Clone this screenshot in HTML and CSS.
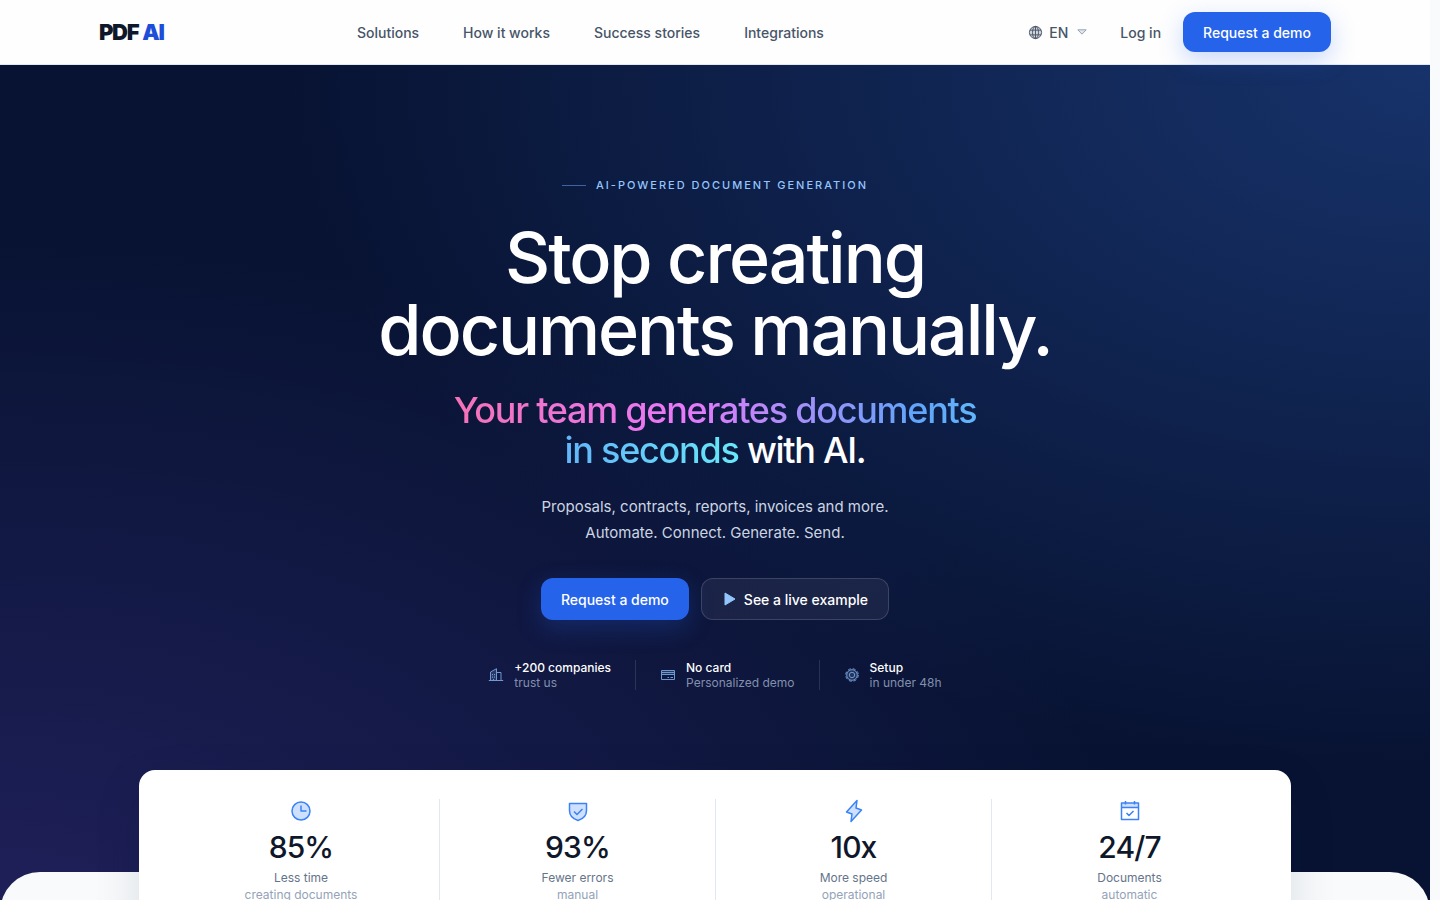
FILE: index.html
```html
<!DOCTYPE html>
<html lang="en">
<head>
  <meta charset="UTF-8">
  <meta name="viewport" content="width=device-width, initial-scale=1.0">
  <title>PDF AI</title>
  <link rel="stylesheet" href="styles.css">
</head>
<body>

  <header class="header">
    <div class="header-inner">
      <a class="logo" href="#">PDF<span>AI</span></a>

      <nav class="nav">
        <a href="#solutions">Solutions</a>
        <a href="#how">How it works</a>
        <a href="#stories">Success stories</a>
        <a href="#integrations">Integrations</a>
      </nav>

      <div class="header-actions">
        <div class="lang">
          <svg class="globe" viewBox="0 0 16 16" aria-hidden="true">
            <circle class="soft" cx="8" cy="8" r="6.5"/>
            <circle cx="8" cy="8" r="6.5"/>
            <ellipse cx="8" cy="8" rx="3.2" ry="6.5"/>
            <path d="M8 1.5v13M2 5.5h12M2 10.5h12"/>
          </svg>
          <select name="lang" aria-label="Language">
            <option>EN</option>
          </select>
          <svg class="caret" viewBox="0 0 10 6" aria-hidden="true">
            <path class="soft" d="M0.8 0.8h8.4L5 5.2z"/>
            <path d="M0.8 0.8h8.4L5 5.2z"/>
          </svg>
        </div>
        <a class="login" href="#login">Log in</a>
        <button type="button" class="btn btn-primary">Request a demo</button>
      </div>
    </div>
  </header>

  <main>
    <section class="hero">
      <p class="eyebrow">AI-powered document generation</p>
      <h1>Stop creating<br>documents manually.</h1>
      <p class="subtitle"><span class="gradient-text">Your team generates documents<br>in seconds</span> with AI.</p>
      <p class="lead">Proposals, contracts, reports, invoices and more.<br>Automate. Connect. Generate. Send.</p>

      <div class="hero-buttons">
        <button type="button" class="btn btn-primary btn-tall">Request a demo</button>
        <button type="button" class="btn btn-ghost btn-tall">
          <svg class="play" viewBox="0 0 14 16" aria-hidden="true"><path d="M3 2v12l10-6z"/></svg>
          See a live example
        </button>
      </div>

      <ul class="trust">
        <li>
          <svg viewBox="0 0 16 16" aria-hidden="true">
            <path class="soft" d="M3 5L8.500 2v12H3z"/>
            <path d="M.8 13.500h14.400M2.500 13.500V5L8.500 1.700V13.500M8.500 5.500h4.500v8M4.500 7v1.200M6.500 7v1.200M4.500 9.500v1.200M6.500 9.500v1.200M5.500 13.500v-1.500"/>
          </svg>
          <div><strong>+200 companies</strong><span>trust us</span></div>
        </li>
        <li>
          <svg viewBox="0 0 16 16" aria-hidden="true">
            <path class="soft" d="M1.500 3.500h13v4h-13z"/>
            <path d="M1.500 3.500h13v9h-13zM1.500 5.500h13M1.500 7.500h13M7.500 10.500h1.500M10.500 10.500h2.500"/>
          </svg>
          <div><strong>No card</strong><span>Personalized demo</span></div>
        </li>
        <li>
          <svg viewBox="0 0 16 16" aria-hidden="true">
            <circle class="soft" cx="8" cy="8" r="5.500"/>
            <circle cx="8" cy="8" r="5.300"/>
            <circle class="teeth" cx="8" cy="8" r="6.300"/>
            <circle cx="8" cy="8" r="2.700"/>
          </svg>
          <div><strong>Setup</strong><span>in under 48h</span></div>
        </li>
      </ul>
    </section>

    <section class="panel">
      <div class="stats">
        <div class="stat">
          <svg viewBox="0 0 24 24" aria-hidden="true">
            <circle class="soft" cx="12" cy="12" r="9"/>
            <circle cx="12" cy="12" r="9"/>
            <path d="M12 6.500V12h5.500"/>
          </svg>
          <strong>85%</strong>
          <span class="label">Less time</span>
          <span class="note">creating documents</span>
        </div>
        <div class="stat">
          <svg viewBox="0 0 24 24" aria-hidden="true">
            <path class="soft" d="M3.500 4.500h17v7c0 5-3.700 8.500-8.500 10-4.800-1.500-8.500-5-8.500-10z"/>
            <path d="M3.500 4.500h17v7c0 5-3.700 8.500-8.500 10-4.800-1.500-8.500-5-8.500-10z"/>
            <path d="M8 12.500l3 3 5.500-5.500"/>
          </svg>
          <strong>93%</strong>
          <span class="label">Fewer errors</span>
          <span class="note">manual</span>
        </div>
        <div class="stat">
          <svg viewBox="0 0 24 24" aria-hidden="true">
            <path class="soft" d="M15 1.500L4.500 13l5.500 2-1 7.500L19.500 11l-5.500-2z"/>
            <path d="M15 1.500L4.500 13l5.500 2-1 7.500L19.500 11l-5.500-2z"/>
          </svg>
          <strong>10x</strong>
          <span class="label">More speed</span>
          <span class="note">operational</span>
        </div>
        <div class="stat">
          <svg viewBox="0 0 24 24" aria-hidden="true">
            <path class="soft" d="M3.500 4h17v4.500h-17z"/>
            <path d="M3.500 4h17v16.500h-17zM3.500 8.500h17M7.500 2v3.500M16.500 2v3.500M8.500 14l2.500 2.500 4.500-4.500"/>
          </svg>
          <strong>24/7</strong>
          <span class="label">Documents</span>
          <span class="note">automatic</span>
        </div>
      </div>
    </section>
  </main>

</body>
</html>
```

FILE: styles.css
```css
* {
  box-sizing: border-box;
}

html {
  background: #f8fafc;
}

body {
  margin: 0;
  padding-right: 10px;
  font-family: Inter, "Liberation Sans", sans-serif;
  font-size: 14px;
  color: #0f172a;
}

a {
  color: inherit;
  text-decoration: none;
}

h1, p, ul {
  margin: 0;
  padding: 0;
}

svg {
  fill: none;
  stroke: currentColor;
  stroke-linejoin: round;
  flex-shrink: 0;
}

.header {
  background: #fefefe;
  border-bottom: 1px solid #e2e8f0;
}

.header-inner {
  display: flex;
  align-items: center;
  justify-content: space-between;
  max-width: 1280px;
  height: 64px;
  margin: 0 auto;
  padding: 0 24px;
}

.logo {
  display: flex;
  gap: 4px;
  font-size: 22px;
  font-weight: 900;
  letter-spacing: -0.06em;
}

.logo span {
  color: #1d4ed8;
}

.nav {
  display: flex;
  gap: 44px;
  font-weight: 500;
  color: #475569;
}

.header-actions {
  display: flex;
  align-items: center;
  gap: 22px;
  font-weight: 500;
  color: #475569;
}

.lang {
  display: flex;
  align-items: center;
  padding: 0 11px;
}

.lang select {
  appearance: none;
  border: 0;
  background: none;
  padding: 0;
  margin: 0 8px 0 6px;
  font: inherit;
  color: inherit;
}

.globe {
  width: 15px;
  height: 15px;
}

.caret {
  width: 10px;
  height: 6px;
  color: #94a3b8;
}

.btn {
  display: flex;
  align-items: center;
  justify-content: center;
  gap: 8px;
  height: 40px;
  padding: 0 20px;
  border: 0;
  border-radius: 12px;
  font: inherit;
  font-weight: 500;
  color: white;
  cursor: pointer;
}

.btn-primary {
  background: #2563eb;
  box-shadow: 0 8px 24px rgba(37, 99, 235, 0.25);
}

.btn-ghost {
  background: rgba(255, 255, 255, 0.06);
  border: 1px solid rgba(255, 255, 255, 0.15);
}

.btn-tall {
  height: 42px;
}

.hero {
  display: flex;
  flex-direction: column;
  align-items: center;
  padding: 112px 24px 250px;
  text-align: center;
  color: white;
  background:
    radial-gradient(ellipse 80% 80% at 100% 0%, rgba(49, 107, 205, 0.36), rgba(49, 107, 205, 0)),
    radial-gradient(ellipse 80% 80% at 0% 100%, rgba(62, 49, 140, 0.44), rgba(62, 49, 140, 0)),
    #081333;
}

.eyebrow {
  display: flex;
  align-items: center;
  gap: 10px;
  font-size: 11px;
  line-height: 16px;
  font-weight: 500;
  letter-spacing: 2px;
  text-transform: uppercase;
  color: #93c5fd;
}

.eyebrow::before {
  content: "";
  width: 24px;
  height: 1px;
  background: #3f639f;
}

h1 {
  margin-top: 29px;
  font-size: 70px;
  line-height: 72px;
  font-weight: 500;
  letter-spacing: -0.03em;
}

.subtitle {
  margin-top: 24px;
  font-size: 36px;
  line-height: 40px;
  font-weight: 500;
  letter-spacing: -0.035em;
}

.gradient-text {
  background: linear-gradient(90deg, #f472b6, #e879f9, #60a5fa, #67e8f9);
  background-clip: text;
  -webkit-background-clip: text;
  color: transparent;
}

.lead {
  margin-top: 24px;
  font-size: 15px;
  line-height: 26px;
  color: #cbd5e1;
}

.hero-buttons {
  display: flex;
  gap: 12px;
  margin-top: 32px;
}

.play {
  width: 14px;
  height: 16px;
  fill: #93c5fd;
  stroke: #93c5fd;
}

.trust {
  display: flex;
  margin-top: 40px;
  list-style: none;
  font-size: 12px;
  line-height: 15px;
  text-align: left;
}

.trust li {
  display: flex;
  align-items: center;
  gap: 10px;
  padding: 0 24px;
}

.trust li + li {
  border-left: 1px solid rgba(255, 255, 255, 0.12);
}

.trust svg {
  width: 16px;
  height: 16px;
  color: #6f98cf;
}

.trust strong,
.trust span {
  display: block;
}

.trust strong {
  font-weight: 500;
}

.trust span {
  color: #8290ae;
}

.soft {
  stroke: none;
  fill: currentColor;
  opacity: 0.25;
}

.teeth {
  stroke-width: 1;
  stroke-dasharray: 3 1.948;
}

.panel {
  position: relative;
  display: flex;
  justify-content: center;
  margin-top: -68px;
  padding: 0 24px 80px;
  border-radius: 40px 40px 0 0;
  background: #f8fafc;
}

.stats {
  display: grid;
  grid-template-columns: repeat(4, 1fr);
  width: 100%;
  max-width: 1152px;
  margin-top: -102px;
  padding: 29px 24px;
  border-radius: 16px;
  background: white;
  box-shadow: 0 16px 48px rgba(15, 23, 42, 0.12);
}

.stat {
  display: flex;
  flex-direction: column;
  align-items: center;
  font-size: 12px;
  line-height: 17px;
}

.stat + .stat {
  border-left: 1px solid #e2e8f0;
}

.stat svg {
  width: 24px;
  height: 24px;
  stroke-width: 1.5;
  color: #3b82f6;
}

.stat strong {
  margin: 8px 0 6px;
  font-size: 30px;
  line-height: 32px;
  font-weight: 500;
  letter-spacing: -0.03em;
}

.label {
  color: #64748b;
}

.note {
  color: #94a3b8;
}
```
